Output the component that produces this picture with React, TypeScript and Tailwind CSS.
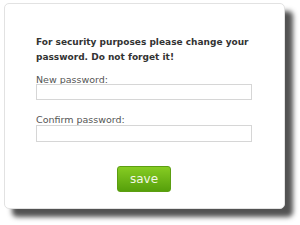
import React from "react";

export default function App() {
  return (
    <div className="w-[300px] h-[225px] bg-white pt-[3px] pl-[4px] font-['DejaVu_Sans',Verdana,sans-serif]">
      <div className="w-[281px] h-[206px] bg-white rounded-[5px] border border-[#e2e2e2] shadow-[8px_8px_5px_rgba(0,0,0,0.68)] pl-[31px] pr-[31px] pt-[31px] flex flex-col">
        <p className="text-[9px] leading-[15px] font-bold text-[#333]">
          For security purposes please change your password. Do not forget it!
        </p>
        <label className="mt-[11px] text-[9.5px] leading-[8px] text-[#555] block">New password:</label>
        <input
          type="password"
          className="mt-0 w-[216px] h-[16px] border border-[#d6d6d6] bg-white outline-none"
        />
        <label className="mt-[16px] text-[9.5px] leading-[8px] text-[#555] block">Confirm password:</label>
        <input
          type="password"
          className="mt-[1px] w-[216px] h-[17px] border border-[#d6d6d6] bg-white outline-none"
        />
        <div className="flex justify-center mt-[24px] pr-[1px]">
          <button className="w-[54px] h-[26px] rounded-[3px] bg-gradient-to-b from-[#86cc22] to-[#56a00a] border border-[#5c9e12] text-[#f2f7e6] text-[12px] leading-none">
            save
          </button>
        </div>
      </div>
    </div>
  );
}
